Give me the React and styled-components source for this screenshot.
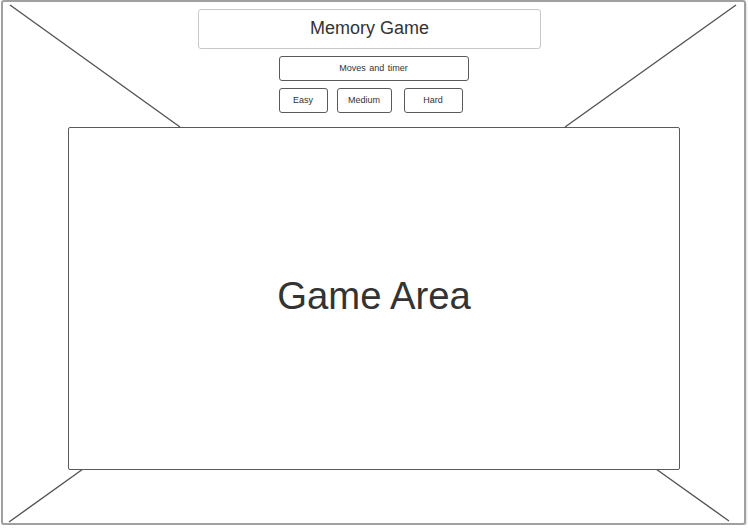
import React from "react";
import styled, { createGlobalStyle } from "styled-components";

const Global = createGlobalStyle`
  html, body { margin: 0; padding: 0; background: #ffffff; }
  body { font-family: "Liberation Sans", Arial, sans-serif; color: #333333; }
`;

const Frame = styled.div`
  position: relative;
  box-sizing: border-box;
  margin-left: 1px;
  width: 745px;
  height: 525px;
  border: 2px solid #a0a0a0;
  border-radius: 3px;
  box-shadow: 1px 2px 2px rgba(0, 0, 0, 0.12);
  background: #fff;
  display: flex;
  flex-direction: column;
  align-items: center;
  padding-top: 7px;
`;

const Lines = styled.svg`
  position: absolute;
  left: 0;
  top: 0;
  width: 100%;
  height: 100%;
  pointer-events: none;
`;

const TitleBox = styled.div`
  position: relative;
  align-self: flex-start;
  margin-left: 195px;
  box-sizing: border-box;
  width: 343px;
  height: 40px;
  border: 1px solid #c8c8c8;
  border-radius: 3px;
  background: #fff;
  display: flex;
  align-items: center;
  justify-content: center;
  padding-bottom: 2px;
  font-size: 18px;
  color: #333;
`;

const Stats = styled.div`
  position: relative;
  box-sizing: border-box;
  margin-top: 7px;
  width: 190px;
  height: 25px;
  border: 1px solid #5a5a5a;
  border-radius: 3px;
  background: #fff;
  display: flex;
  align-items: center;
  justify-content: center;
  padding-bottom: 2px;
  font-size: 9px;
  word-spacing: 1px;
  color: #333;
`;

const Levels = styled.div`
  position: relative;
  display: flex;
  margin-top: 7px;
  width: 190px;
`;

const Level = styled.div`
  box-sizing: border-box;
  width: ${(p) => p.$w}px;
  margin-left: ${(p) => p.$gap || 0}px;
  height: 25px;
  border: 1px solid #5a5a5a;
  border-radius: 3px;
  background: #fff;
  display: flex;
  align-items: center;
  justify-content: center;
  padding-bottom: 2px;
  font-size: 9px;
  color: #333;
`;

const GameArea = styled.div`
  position: relative;
  box-sizing: border-box;
  margin-top: 14px;
  margin-left: 1px;
  width: 612px;
  height: 343px;
  border: 1px solid #5a5a5a;
  border-radius: 2px;
  background: #fff;
  display: flex;
  align-items: center;
  justify-content: center;
  font-size: 38.3px;
  color: #333;
  padding-bottom: 5px;
`;

export default function App() {
  return (
    <>
      <Global />
      <Frame>
        <Lines viewBox="0 0 741 521" aria-hidden="true">
          <g stroke="#555" strokeWidth="1.4" fill="none">
            <line x1="7" y1="3" x2="177" y2="125" />
            <line x1="733" y1="3" x2="562" y2="125" />
            <line x1="6" y1="520" x2="80" y2="467" />
            <line x1="653" y1="467" x2="726" y2="519" />
          </g>
        </Lines>
        <TitleBox>Memory Game</TitleBox>
        <Stats>Moves and timer</Stats>
        <Levels>
          <Level $w={49}>Easy</Level>
          <Level $w={55} $gap={9}>Medium</Level>
          <Level $w={59} $gap={12}>Hard</Level>
        </Levels>
        <GameArea>Game Area</GameArea>
      </Frame>
    </>
  );
}
